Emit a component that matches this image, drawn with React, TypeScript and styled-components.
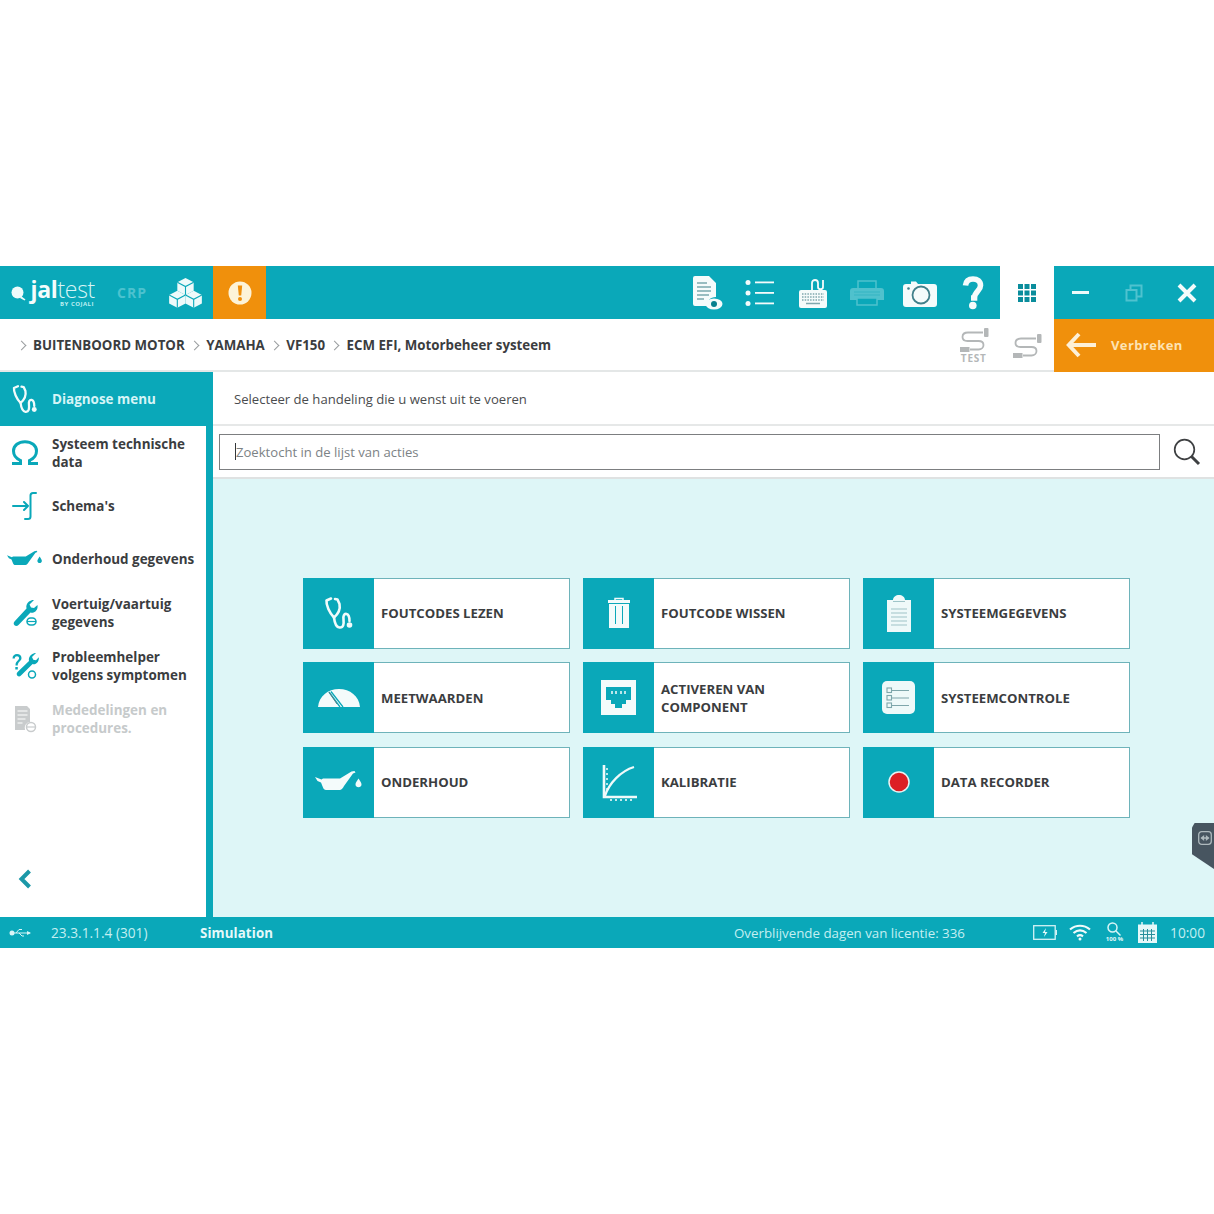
import styled, { createGlobalStyle } from "styled-components";
import { ReactNode } from "react";

const TEAL = "#0aa8b9";
const ORANGE = "#f0900c";
const INK = "#3b3d3f";

const GlobalStyle = createGlobalStyle`
  html, body { margin: 0; padding: 0; background: #fff; }
  body { font-family: "Open Sans", "Liberation Sans", sans-serif; color: ${INK}; }
`;

// icons
const Stethoscope = ({ size = 34, color = "#f2fbfb" }: { size?: number; color?: string }) => (
  <svg width={size} height={size} viewBox="0 0 34 34" fill="none" stroke={color} strokeWidth="2.6" strokeLinecap="round" strokeLinejoin="round">
    <path d="M9 2.500 4.500 4.500C4 9 7.500 17 12 21.500 16 18 18.500 13 17.500 8L15.500 3.500 13 3" />
    <path d="M12 21.500C12.500 26 13.500 31 17.500 31.500 21.500 32 22 28 21.500 23.500 21 20 22 17.500 24.500 18 27 18.500 27.500 21 27.500 25" />
    <circle cx="27.500" cy="29" r="2.800" fill={color} stroke="none" />
  </svg>
);

const OilCan = ({ width = 48, color = "#f4fbfb" }: { width?: number; color?: string }) => (
  <svg width={width} height={width * 0.5} viewBox="0 0 48 24" fill={color}>
    <path d="M0 7 6.500 9.500 8 8.500H25L36.500 1.500 39.500 1 40.500 2.500 38 3.500 29 16C28 18 26.500 20 24.500 20H11C9.500 20 8.500 19 8 17.500L6 12.500 2.500 11Z" />
    <path d="M43.500 8.500C45 11 46.500 12.500 46.500 14.500 46.500 16.200 45 17.300 43.500 17.300 42 17.300 40.500 16.200 40.500 14.500 40.500 12.500 42 11 43.500 8.500Z" />
  </svg>
);

const Wrench = ({ color = TEAL }: { color?: string }) => (
  <svg width="26" height="28" viewBox="0 0 26 28" fill={color}>
    <path d="M22 1 17.500 5.500l1.500 3 3 .5L25.500 6c.5 3.500-1 6.500-4 7.500-1 .3-2 .3-3 0L6.500 26c-1.200 1.300-3 1.300-4 .2-1.200-1.200-1-2.800.2-4L14.500 9.500c-.6-2.600.2-5.300 2.500-7C18.500 1.400 20.500.8 22 1Z" />
    <rect x="15" y="19" width="9" height="7" rx="3.500" fill="none" stroke={color} strokeWidth="1.500" />
    <path d="M15 22.500h9" stroke={color} strokeWidth="1.200" />
  </svg>
);

const Helper = () => (
  <svg width="28" height="28" viewBox="0 0 28 28" fill={TEAL}>
    <path d="M1.500 6.500C1.500 3.500 3.500 2 6 2s4.500 1.600 4.500 4c0 3.500-3.800 3.500-3.800 7.500H4.500c0-4.800 3.600-4.700 3.600-7.400C8.100 5 7.200 4.200 6 4.200S3.800 5 3.800 6.500Z" />
    <rect x="4.300" y="15" width="2.500" height="2.500" />
    <path d="M25 1 21 5l1.300 2.700 2.700.5 2.800-3c.4 3.100-.9 5.800-3.500 6.700-.9.300-1.800.3-2.700 0L10 23.500c-1.100 1.200-2.700 1.200-3.600.2-1.100-1.100-.9-2.500.2-3.600L18 9c-.5-2.400.2-4.800 2.300-6.300C21.600 1.700 23.600 1 25 1Z" />
    <circle cx="21" cy="22.500" r="3.500" fill="none" stroke={TEAL} strokeWidth="1.500" />
  </svg>
);

const Schema = () => (
  <svg width="28" height="30" viewBox="0 0 28 30" fill="none" stroke={TEAL} strokeWidth="2" strokeLinecap="round" strokeLinejoin="round">
    <path d="M25 2h-3c-1.500 0-2.500 1-2.500 2.500V25.500c0 1.500-1 2.500-2.500 2.500h-3" />
    <path d="M2 15h15M13 11l4 4-4 4" />
  </svg>
);

const Omega = () => (
  <svg width="28" height="26" viewBox="0 0 28 26" fill="none" stroke={TEAL} strokeWidth="3">
    <path d="M1 23.500h8.500v-3C5 18.500 2.500 15 2.500 11 2.500 5.500 7.500 1.700 14 1.700S25.500 5.500 25.500 11c0 4-2.500 7.500-7 9.500v3H27" />
  </svg>
);

const Notices = () => (
  <svg width="24" height="28" viewBox="0 0 24 28" fill="#c9cccd">
    <path d="M2 1h12l3 3v13a6 6 0 0 0-5 8H2Z" />
    <path d="M4.500 6h10M4.500 10h10M4.500 14h8M4.500 18h5" stroke="#fff" strokeWidth="1.200" />
    <circle cx="18" cy="22" r="4.500" fill="none" stroke="#c9cccd" strokeWidth="1.500" />
    <path d="M14 22h8" stroke="#c9cccd" strokeWidth="1.200" />
  </svg>
);

const LogoGlass = () => (
  <svg width="16" height="16" viewBox="0 0 16 16" fill="#f0fbfb">
    <circle cx="6.500" cy="7.500" r="6" />
    <path d="M10 11l4.500 3.500-1 1L9 13Z" />
  </svg>
);

const Cube = ({ x, y }: { x: number; y: number }) => (
  <g transform={`translate(${x} ${y})`}>
    <path d="M9 0 18 4.700V14L9 18.700 0 14V4.700Z" fill="#eefafa" />
    <path d="M0 4.700 9 9.400 18 4.700M9 9.400V18.700" fill="none" stroke={TEAL} strokeWidth="1.200" />
  </g>
);

const Cubes = () => (
  <svg width="33" height="30" viewBox="0 0 36 33">
    <Cube x={9} y={0} />
    <Cube x={0} y={14} />
    <Cube x={18} y={14} />
  </svg>
);

const Alert = () => (
  <svg width="24" height="24" viewBox="0 0 24 24">
    <circle cx="12" cy="12" r="11.500" fill="#fdf3d8" />
    <path d="M9.800 4.500h4.400l-1 10h-2.400Z" fill={ORANGE} />
    <circle cx="12" cy="18" r="2" fill={ORANGE} />
  </svg>
);

const ReportEye = () => (
  <svg width="32" height="36" viewBox="0 0 32 36" fill="#f5fbfb">
    <path d="M2 3a2 2 0 0 1 2-2h14l7 7v14c-6 0-9 4-10 9H4a2 2 0 0 1-2-2Z" />
    <path d="M6 8h10M6 12h14M6 16h14M6 20h12M6 24h7" stroke="#7aa9af" strokeWidth="1.300" />
    <ellipse cx="23" cy="29" rx="8.500" ry="5.500" />
    <circle cx="23" cy="29" r="3" fill="#08808e" />
  </svg>
);

const ListIcon = () => (
  <svg width="30" height="28" viewBox="0 0 30 28" fill="#f5fbfb">
    <circle cx="3" cy="3.500" r="2.500" />
    <circle cx="3" cy="14" r="2.500" />
    <circle cx="3" cy="24.500" r="2.500" />
    <rect x="10" y="2.500" width="19" height="1.800" />
    <rect x="10" y="13" width="19" height="1.800" />
    <rect x="10" y="23.500" width="19" height="1.800" />
  </svg>
);

const Keyboard = () => (
  <svg width="28" height="30" viewBox="0 0 28 30">
    <rect x="0" y="12" width="28" height="18" rx="2" fill="#f5fbfb" />
    <path d="M3 16h22M3 19h22M3 22h22" stroke="#7fa7ad" strokeWidth="1.300" strokeDasharray="1.500 1.200" />
    <path d="M7 25.500h14" stroke="#7fa7ad" strokeWidth="1.500" />
    <path d="M13 12V5c0-4 6-4 6 0v4c0 3 5 3 5 0V2" fill="none" stroke="#f5fbfb" strokeWidth="1.800" />
  </svg>
);

const Printer = () => (
  <svg width="34" height="26" viewBox="0 0 34 26" fill="#4fc1cd">
    <path d="M8 1h18v8H8Z" fill="none" stroke="#4fc1cd" strokeWidth="1.500" />
    <path d="M3 8h28a3 3 0 0 1 3 3v9H0v-9a3 3 0 0 1 3-3Z" />
    <path d="M4 12h26M4 15h26" stroke="#35b5c3" strokeWidth="1" />
    <path d="M7 18h20v7H7Z" fill={TEAL} stroke="#4fc1cd" strokeWidth="1.500" />
  </svg>
);

const Camera = () => (
  <svg width="34" height="28" viewBox="0 0 34 28">
    <path d="M3 5h5V2.500h5L15 5h16a3 3 0 0 1 3 3v17a3 3 0 0 1-3 3H3a3 3 0 0 1-3-3V8a3 3 0 0 1 3-3Z" fill="#f5fbfb" />
    <circle cx="18" cy="16" r="8.500" fill="none" stroke="#41808b" strokeWidth="1.800" />
    <circle cx="5.500" cy="9.500" r="1.300" fill="#41808b" />
  </svg>
);

const Question = () => (
  <svg width="22" height="34" viewBox="0 0 22 34" fill="none">
    <path d="M3.500 9.500C4 5 7 3 11 3c4.500 0 7.500 2.500 7.500 6.500 0 5.500-6 6-6 12.500H9" stroke="#f5fbfb" strokeWidth="5.600" />
    <circle cx="10.800" cy="29.500" r="3.800" fill="#f5fbfb" />
  </svg>
);

const Dots = () => (
  <svg width="18" height="18" viewBox="0 0 18 18" fill="#0a8d9c">
    {[0, 1, 2].flatMap((r) => [0, 1, 2].map((c) => <rect key={`${r}${c}`} x={c * 6.5} y={r * 6.5} width="5" height="5" />))}
  </svg>
);

const Restore = () => (
  <svg width="18" height="18" viewBox="0 0 18 18" fill="none" stroke="#4fc2cf" strokeWidth="2">
    <rect x="5.500" y="1.500" width="11" height="11" />
    <rect x="1.500" y="6" width="10" height="10.500" fill={TEAL} />
  </svg>
);

const Close = () => (
  <svg width="20" height="20" viewBox="0 0 20 20" stroke="#f4fbfb" strokeWidth="4">
    <path d="M2 2l16 16M18 2L2 18" />
  </svg>
);

const Cable = () => (
  <svg width="30" height="24" viewBox="0 0 30 24" fill="none" stroke="#b4b7b8" strokeWidth="1.800">
    <path d="M24 4.500H9C5 4.500 3.500 6.500 3.500 9c0 3 2 4 5 4h11c3 0 5 1.500 5 4s-2 4.500-5 4.500H11" />
    <rect x="25" y="0" width="4.500" height="9" rx="1" fill="#b4b7b8" stroke="none" />
    <rect x="1" y="19" width="9.500" height="5" fill="#b4b7b8" stroke="none" />
  </svg>
);

const BackArrow = () => (
  <svg width="30" height="26" viewBox="0 0 30 26" fill="none" stroke="#fdf0d8" strokeWidth="4">
    <path d="M13 2 2.800 13 13 24M3 13h27" />
  </svg>
);

const SearchGlass = () => (
  <svg width="28" height="28" viewBox="0 0 28 28" fill="none" stroke="#3e4042">
    <circle cx="11.500" cy="11.500" r="9.800" strokeWidth="1.700" />
    <path d="M18.500 18.500 26 26" strokeWidth="3" />
  </svg>
);

const Trash = () => (
  <svg width="22" height="32" viewBox="0 0 22 32" fill="#f2fbfb">
    <path d="M7 3V1.500h8V3" fill="none" stroke="#f2fbfb" strokeWidth="1.500" />
    <rect x="0" y="3" width="22" height="3" />
    <path d="M1 7h20v24H1Z" />
    <path d="M7.500 9v18M14.500 9v18" stroke={TEAL} strokeWidth="1" />
  </svg>
);

const Port = () => (
  <svg width="35" height="35" viewBox="0 0 35 35">
    <rect width="35" height="35" fill="#f4fbfb" />
    <path d="M5 7h25v13h-5v4h-4v4h-7v-4h-4v-4H5Z" fill={TEAL} />
    <path d="M11 11v3M15 11v3M20 11v3M24 11v3" stroke="#f4fbfb" strokeWidth="1.500" />
  </svg>
);

const Curve = () => (
  <svg width="36" height="38" viewBox="0 0 36 38" fill="none" stroke="#f0fafa">
    <path d="M3 2v32h33" strokeWidth="2.600" />
    <path d="M4 33C8 20 20 8 33 4" strokeWidth="2.200" />
    <path d="M5 6h2M5 11h2M5 16h2M5 21h2M5 26h2M10 36v2M15 36v2M20 36v2M25 36v2M30 36v2" strokeWidth="1.600" />
  </svg>
);

const Clipboard = () => (
  <svg width="26" height="37" viewBox="0 0 26 37" fill="#eff9f9">
    <path d="M1 5h6c0-3 3-5 6-5s6 2 6 5h6v32H1Z" />
    <path d="M5 14h16M5 18h16M5 22h16M5 26h16M5 30h16" stroke="#9fc4c8" strokeWidth="1.200" />
    <path d="M7 6.500h12" stroke="#9fc4c8" strokeWidth="1" />
  </svg>
);

const Checklist = () => (
  <svg width="33" height="33" viewBox="0 0 33 33">
    <rect width="33" height="33" rx="5" fill="#eef9f9" />
    <g fill="none" stroke="#7ea6ab" strokeWidth="1.100">
      <rect x="5" y="7" width="4.500" height="4.500" />
      <rect x="5" y="14.500" width="4.500" height="4.500" />
      <rect x="5" y="22" width="4.500" height="4.500" />
      <path d="M10 9.500h17M10 17h17M10 24.500h17" />
    </g>
  </svg>
);

const RecordDot = () => (
  <svg width="22" height="22" viewBox="0 0 22 22">
    <circle cx="11" cy="11" r="10" fill="#dc1f24" stroke="#e8f2f2" strokeWidth="1.500" />
  </svg>
);

const Gauge = () => (
  <svg width="42" height="18" viewBox="0 0 42 18">
    <path d="M0 18C1 7 10 0 21 0s20 7 21 18Z" fill="#f4fbfb" />
    <path d="M11 3 22 18M13 2.500 25 18" stroke={TEAL} strokeWidth="1.300" fill="none" />
    <path d="M11 3 19 15" stroke="#5b7d82" strokeWidth="1" />
  </svg>
);

const Usb = () => (
  <svg width="22" height="10" viewBox="0 0 22 10" fill="#d8f5f7">
    <path d="M3 5h18" stroke="#d8f5f7" strokeWidth="1" />
    <circle cx="3" cy="5" r="2.500" />
    <path d="M7 5l3-3.500h3M10 5l3 3h2" stroke="#d8f5f7" strokeWidth="1" fill="none" />
    <path d="M18 3l4 2-4 2Z" />
  </svg>
);

const Battery = () => (
  <svg width="24" height="15" viewBox="0 0 24 15" fill="none" stroke="#d4f3f5">
    <rect x=".7" y=".7" width="21.500" height="13.600" strokeWidth="1.300" />
    <path d="M13 3 9.500 8H12l-1 4 3.500-5H12Z" fill="#e6fafa" stroke="none" />
    <rect x="22.500" y="5" width="1.500" height="5" fill="#d4f3f5" stroke="none" />
  </svg>
);

const Wifi = () => (
  <svg width="22" height="17" viewBox="0 0 22 17" fill="none" stroke="#f0fbfb" strokeWidth="2.200">
    <path d="M1 5.500c6-5 14-5 20 0M4.500 9c4-3.300 9-3.300 13 0M8 12.300c2-1.500 4-1.500 6 0" />
    <circle cx="11" cy="15" r="1.500" fill="#f0fbfb" stroke="none" />
  </svg>
);

const Zoomed = () => (
  <svg width="14" height="14" viewBox="0 0 14 14" fill="none" stroke="#d8f5f7" strokeWidth="1.500">
    <circle cx="5.500" cy="5.500" r="4.500" />
    <path d="M9 9l4.500 4.500" />
  </svg>
);

const Calendar = () => (
  <svg width="19" height="21" viewBox="0 0 19 21">
    <rect x="0" y="2.500" width="19" height="18.500" fill="#e6f8f9" />
    <path d="M4 0v4M15 0v4" stroke="#e6f8f9" strokeWidth="1.500" />
    <path d="M2 9h15M2 12.500h15M2 16h15M5.500 7v12M9.500 7v12M13.500 7v12" stroke="#268f9c" strokeWidth="1" />
  </svg>
);

const Remote = () => (
  <svg width="14" height="14" viewBox="0 0 14 14" fill="none" stroke="#aeb9bd" strokeWidth="1.300">
    <rect x=".7" y=".7" width="12.600" height="12.600" rx="3" />
    <path d="M3 7h8M3.500 7 5.500 5.300v3.400ZM10.500 7 8.500 5.300v3.400Z" />
  </svg>
);

// data
const crumbs = ["BUITENBOORD MOTOR", "YAMAHA", "VF150", "ECM EFI, Motorbeheer systeem"];

const menu: { icon: ReactNode; label: ReactNode; muted?: boolean }[] = [
  { icon: <Omega />, label: <>Systeem technische<br />data</> },
  { icon: <Schema />, label: "Schema's" },
  { icon: <OilCan width={36} color={TEAL} />, label: "Onderhoud gegevens" },
  { icon: <Wrench />, label: <>Voertuig/vaartuig<br />gegevens</> },
  { icon: <Helper />, label: <>Probleemhelper<br />volgens symptomen</> },
  { icon: <Notices />, label: <>Mededelingen en<br />procedures.</>, muted: true },
];

const actions: { icon: ReactNode; label: ReactNode }[] = [
  { icon: <Stethoscope />, label: "FOUTCODES LEZEN" },
  { icon: <Trash />, label: "FOUTCODE WISSEN" },
  { icon: <Clipboard />, label: "SYSTEEMGEGEVENS" },
  { icon: <Gauge />, label: "MEETWAARDEN" },
  { icon: <Port />, label: <>ACTIVEREN VAN<br />COMPONENT</> },
  { icon: <Checklist />, label: "SYSTEEMCONTROLE" },
  { icon: <OilCan />, label: "ONDERHOUD" },
  { icon: <Curve />, label: "KALIBRATIE" },
  { icon: <RecordDot />, label: "DATA RECORDER" },
];

const App = () => (
  <>
    <GlobalStyle />
    <Page>
      <Window>
        <TopBar>
          <Brand>
            <LogoGlass />
            <LogoText>
              <LogoWord><b>jal</b>test</LogoWord>
              <LogoSub>BY COJALI</LogoSub>
            </LogoText>
            <Crp>CRP</Crp>
            <CubesSlot><Cubes /></CubesSlot>
          </Brand>
          <AlertButton><Alert /></AlertButton>
          <ToolStrip>
            <ToolButton><ReportEye /></ToolButton>
            <ToolButton><ListIcon /></ToolButton>
            <ToolButton><Keyboard /></ToolButton>
            <ToolButton><Printer /></ToolButton>
            <ToolButton><Camera /></ToolButton>
            <ToolButton><Question /></ToolButton>
          </ToolStrip>
          <AppsButton><Dots /></AppsButton>
          <WindowControls>
            <WindowButton><Minimize /></WindowButton>
            <WindowButton><Restore /></WindowButton>
            <WindowButton><Close /></WindowButton>
          </WindowControls>
        </TopBar>

        <CrumbBar>
          <Crumbs>
            {crumbs.map((c) => (
              <Crumb key={c}><CrumbArrow />{c}</Crumb>
            ))}
          </Crumbs>
          <CableButton><Cable /><TestLabel>TEST</TestLabel></CableButton>
          <CableButton><Cable /></CableButton>
          <Disconnect><BackArrow /><span>Verbreken</span></Disconnect>
        </CrumbBar>

        <Body>
          <Sidebar>
            <SideHead>
              <SideIcon><Stethoscope size={30} /></SideIcon>
              <span>Diagnose menu</span>
            </SideHead>
            <SideList>
              {menu.map((m, i) => (
                <SideItem key={i} $muted={m.muted}>
                  <SideIcon>{m.icon}</SideIcon>
                  <span>{m.label}</span>
                </SideItem>
              ))}
              <Collapse>
                <svg width="14" height="20" viewBox="0 0 14 20" fill="none" stroke="#1b98a8" strokeWidth="4">
                  <path d="M11.500 2 3.500 10l8 8" />
                </svg>
              </Collapse>
            </SideList>
          </Sidebar>

          <Content>
            <Prompt>Selecteer de handeling die u wenst uit te voeren</Prompt>
            <SearchRow>
              <SearchBox><Caret />Zoektocht in de lijst van acties</SearchBox>
              <SearchButton><SearchGlass /></SearchButton>
            </SearchRow>
            <Actions>
              <ActionGrid>
                {actions.map((a, i) => (
                  <ActionCard key={i}>
                    <ActionIcon>{a.icon}</ActionIcon>
                    <ActionLabel>{a.label}</ActionLabel>
                  </ActionCard>
                ))}
              </ActionGrid>
              <RemoteTab><Remote /></RemoteTab>
            </Actions>
          </Content>
        </Body>

        <StatusBar>
          <UsbSlot><Usb /></UsbSlot>
          <Version>23.3.1.1.4 (301)</Version>
          <Mode>Simulation</Mode>
          <License>Overblijvende dagen van licentie: 336</License>
          <Tray>
            <BatterySlot><Battery /></BatterySlot>
            <Wifi />
            <ZoomTray><Zoomed /><small>100 %</small></ZoomTray>
            <Calendar />
            <Clock>10:00</Clock>
          </Tray>
        </StatusBar>
      </Window>
    </Page>
  </>
);

export default App;

const Page = styled.div`
  height: 1214px;
  padding-top: 266px;
  box-sizing: border-box;
  background: #fff;
  overflow: hidden;
`;

const Window = styled.div`
  display: flex;
  flex-direction: column;
  height: 682px;
`;

const TopBar = styled.div`
  display: flex;
  height: 53px;
  flex: none;
`;

const Brand = styled.div`
  display: flex;
  align-items: center;
  width: 213px;
  padding-left: 11px;
  box-sizing: border-box;
  background: ${TEAL};
`;

const LogoText = styled.div`
  display: flex;
  flex-direction: column;
  align-items: flex-end;
  width: 68px;
`;

const LogoWord = styled.div`
  font-size: 23px;
  line-height: 24px;
  color: #d8f5f6;
  font-weight: 300;
  letter-spacing: -0.3px;
  b { font-weight: 700; color: #f4fcfc; }
`;

const LogoSub = styled.div`
  font-size: 6px;
  line-height: 7px;
  font-weight: 700;
  letter-spacing: 0.5px;
  color: #bdeef1;
  margin-right: 1px;
`;

const Crp = styled.div`
  margin-left: 22px;
  font-size: 14px;
  font-weight: 700;
  letter-spacing: 1px;
  color: #4cc2cf;
`;

const CubesSlot = styled.div`
  display: flex;
  margin-left: 22px;
`;

const AlertButton = styled.div`
  display: flex;
  align-items: center;
  justify-content: center;
  width: 53px;
  background: ${ORANGE};
`;

const ToolStrip = styled.div`
  flex: 1;
  display: flex;
  align-items: center;
  justify-content: flex-end;
  background: ${TEAL};
`;

const ToolButton = styled.div`
  display: flex;
  align-items: center;
  justify-content: center;
  width: 53.3px;
  height: 100%;
`;

const AppsButton = styled.div`
  display: flex;
  align-items: center;
  justify-content: center;
  width: 54px;
  background: #fff;
`;

const WindowControls = styled.div`
  display: flex;
  width: 160px;
  background: ${TEAL};
`;

const WindowButton = styled.div`
  flex: 1;
  display: flex;
  align-items: center;
  justify-content: center;
`;

const Minimize = styled.span`
  width: 17px;
  height: 3px;
  background: #eefafa;
`;

const CrumbBar = styled.div`
  display: flex;
  align-items: stretch;
  height: 53px;
  flex: none;
  box-sizing: border-box;
  box-shadow: inset 0 -2px 0 #e4e7e7;
`;

const Crumbs = styled.div`
  flex: 1;
  display: flex;
  align-items: center;
  padding: 0 0 1px 18px;
`;

const Crumb = styled.div`
  display: flex;
  align-items: center;
  font-size: 13.3px;
  font-weight: 700;
  color: ${INK};
  &:not(:first-child) { margin-left: 6.5px; }
`;

const CrumbArrow = styled.span`
  width: 6px;
  height: 6px;
  margin-right: 8px;
  border-top: 1px solid #9a9d9f;
  border-right: 1px solid #9a9d9f;
  transform: rotate(45deg);
`;

const CableButton = styled.div`
  display: flex;
  flex-direction: column;
  align-items: center;
  justify-content: center;
  width: 53.5px;
`;

const TestLabel = styled.div`
  font-size: 10px;
  line-height: 10px;
  margin-top: 1px;
  font-weight: 700;
  letter-spacing: 0.8px;
  color: #b4b7b8;
`;

const Disconnect = styled.div`
  display: flex;
  align-items: center;
  width: 160px;
  box-sizing: border-box;
  padding: 0 0 1px 12px;
  gap: 15px;
  background: ${ORANGE};
  font-size: 13px;
  font-weight: 700;
  letter-spacing: 0.4px;
  color: #fde3b4;
`;

const Body = styled.div`
  flex: 1;
  display: flex;
  min-height: 0;
`;

const Sidebar = styled.div`
  width: 213px;
  flex: none;
  display: flex;
  flex-direction: column;
  background: ${TEAL};
`;

const SideHead = styled.div`
  display: flex;
  align-items: center;
  height: 54px;
  font-size: 13.45px;
  font-weight: 700;
  color: #d6f5f7;
  flex: none;
`;

const SideIcon = styled.div`
  width: 52px;
  flex: none;
  display: flex;
  align-items: center;
  justify-content: center;
  padding-right: 2px;
  box-sizing: border-box;
`;

const SideList = styled.div`
  flex: 1;
  display: flex;
  flex-direction: column;
  margin-right: 7px;
  background: #fff;
`;

const SideItem = styled.div<{ $muted?: boolean }>`
  height: 53.3px;
  display: flex;
  align-items: center;
  font-size: 13.45px;
  line-height: 18px;
  font-weight: 700;
  color: ${({ $muted }) => ($muted ? "#c6cacb" : INK)};
  white-space: nowrap;
`;

const Collapse = styled.div`
  margin-top: auto;
  height: 77px;
  padding-left: 18px;
  display: flex;
  align-items: center;
`;

const Content = styled.div`
  flex: 1;
  display: flex;
  flex-direction: column;
  min-width: 0;
`;

const Prompt = styled.div`
  height: 54px;
  flex: none;
  box-sizing: border-box;
  display: flex;
  align-items: center;
  padding: 1px 0 0 21px;
  font-size: 13.1px;
  color: #4a4c4e;
  border-bottom: 2px solid #e6e8e8;
`;

const SearchRow = styled.div`
  display: flex;
  align-items: center;
  height: 53px;
  flex: none;
  box-sizing: border-box;
  padding-left: 6px;
  border-bottom: 2px solid #dfe2e2;
`;

const SearchBox = styled.div`
  width: 941px;
  height: 36px;
  box-sizing: border-box;
  display: flex;
  align-items: center;
  padding-left: 15px;
  border: 1.5px solid #7c7e80;
  font-size: 13.1px;
  color: #7c8285;
`;

const Caret = styled.span`
  width: 1px;
  height: 17px;
  background: #33383b;
`;

const SearchButton = styled.div`
  flex: 1;
  display: flex;
  justify-content: center;
  padding-right: 1px;
`;

const Actions = styled.div`
  flex: 1;
  position: relative;
  display: flex;
  align-items: center;
  padding: 0 0 1px 90px;
  background: #def6f7;
`;

const ActionGrid = styled.div`
  display: grid;
  grid-template-columns: repeat(3, 267px);
  grid-auto-rows: 71px;
  column-gap: 13px;
  row-gap: 13.5px;
`;

const ActionCard = styled.div`
  display: flex;
  background: #fff;
  border: 1px solid #6eb3ba;
  box-sizing: border-box;
`;

const ActionIcon = styled.div`
  width: 71px;
  flex: none;
  display: flex;
  align-items: center;
  justify-content: center;
  margin: -1px 0 -1px -1px;
  background: ${TEAL};
`;

const ActionLabel = styled.div`
  display: flex;
  align-items: center;
  padding-left: 7px;
  font-size: 13.2px;
  line-height: 18px;
  font-weight: 700;
  color: ${INK};
`;

const RemoteTab = styled.div`
  position: absolute;
  right: 0;
  top: 344px;
  width: 22px;
  height: 46px;
  box-sizing: border-box;
  padding: 5px 0 0 6px;
  background: #475560;
  clip-path: polygon(12% 0, 100% 0, 100% 100%, 0 68%, 0 10%);
`;

const StatusBar = styled.div`
  height: 31px;
  flex: none;
  display: flex;
  align-items: center;
  background: ${TEAL};
  font-size: 13.7px;
  color: #c4eff2;
`;

const UsbSlot = styled.div`
  display: flex;
  width: 51px;
  padding-left: 9px;
  box-sizing: border-box;
`;

const Version = styled.div`
  width: 149px;
`;

const Mode = styled.div`
  width: 534px;
  font-size: 13.3px;
  font-weight: 700;
  letter-spacing: 0.1px;
  color: #e4f9fa;
`;

const License = styled.div`
  flex: 1;
  font-size: 13.3px;
`;

const Tray = styled.div`
  display: flex;
  align-items: center;
  gap: 15px;
  padding-right: 9px;
`;

const BatterySlot = styled.div`
  display: flex;
  margin-right: -3px;
`;

const ZoomTray = styled.div`
  display: flex;
  flex-direction: column;
  align-items: center;
  small {
    font-size: 6px;
    line-height: 7px;
    font-weight: 700;
    color: #e4f9fa;
  }
`;

const Clock = styled.div`
  margin-left: -2px;
`;
